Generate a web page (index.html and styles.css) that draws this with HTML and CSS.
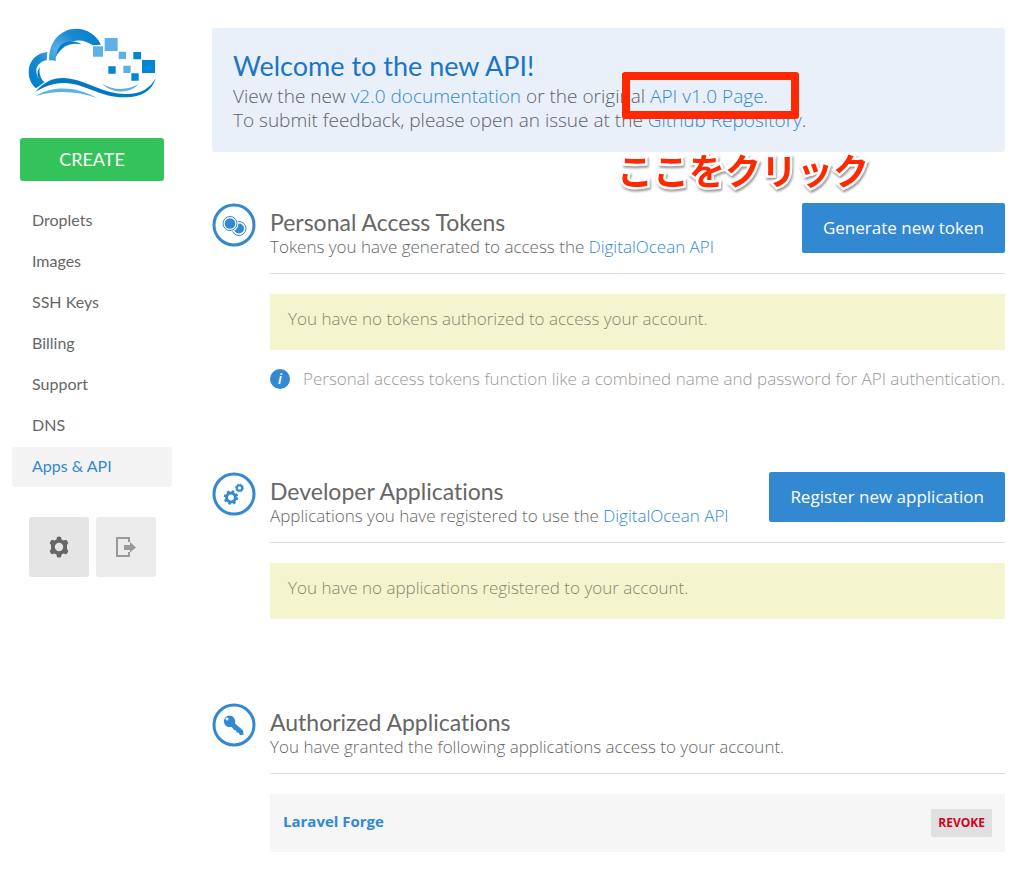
FILE: index.html
```html
<!DOCTYPE html>
<html lang="en">
<head>
<meta charset="utf-8">
<meta name="viewport" content="width=device-width, initial-scale=1">
<title>Apps &amp; API</title>
<link rel="stylesheet" href="styles.css">
</head>
<body>
<div class="page">
  <aside class="sidebar">
    <a class="logo" href="#" aria-label="Home">
      <svg viewBox="54 36 390 216" width="130" height="72" aria-hidden="true">
        <defs>
          <radialGradient id="sky" gradientUnits="userSpaceOnUse" cx="140" cy="100" r="130">
            <stop offset="0" stop-color="#5fb0e6"/><stop offset=".45" stop-color="#1b8ad0"/><stop offset="1" stop-color="#0080cc"/>
          </radialGradient>
        </defs>
        <path fill="url(#sky)" d="M118 134C114 78 152 38 199 38c33 0 60 19 74 48l-25 2c-12-9-30-16-50-14-36 3-62 26-61 62-5-3-12-4-19-2z"/>
        <path fill="url(#sky)" d="M112 108c-34 3-56 28-56 60 0 20 8 37 22 49l26-19c-16-6-25-18-25-34 0-15 12-28 31-31z"/>
        <path fill="#0580c8" d="M138 122c4-42 40-58 77-37-32-7-59 3-77 37zM90 153c-4 18 0 33 14 47-22-8-28-29-14-47z"/>
        <path fill="#007ac2" d="M77 227c30-35 62-46 104-39 56 10 101 45 165 46 45 1 74-16 91-48-10 38-42 59-95 58-70-2-106-33-158-41-40-6-72 5-107 24z"/>
        <path fill="#5eb0e8" d="M77 240c50-31 119-31 186 7-63-22-123-25-186-7zM276 203c37 21 73 21 109 2-27 30-78 28-109-2z"/>
        <path fill="#5eb0e8" d="M249 91h30v31h-30zM284 66h39v39h-39zM326 107h22v22h-22zM340 149h22v22h-22z"/>
        <path fill="#0086d6" d="M370 108h23v22h-23zM396 132h39v39h-39zM295 151h22v22h-22zM364 172h22v22h-22z"/>
      </svg>
    </a>
    <button class="create" type="button">CREATE</button>
    <nav class="nav">
      <a href="#">Droplets</a>
      <a href="#">Images</a>
      <a href="#">SSH Keys</a>
      <a href="#">Billing</a>
      <a href="#">Support</a>
      <a href="#">DNS</a>
      <a class="active" href="#" aria-current="page">Apps &amp; API</a>
    </nav>
    <div class="tools">
      <button class="tool" type="button" aria-label="Settings">
        <svg viewBox="0 0 20 22" width="20" height="22" aria-hidden="true">
          <path fill="#666" fill-rule="evenodd" d="M8 1q2-1 4 0l.6 2.500 1.800 1L17 3.800q1.800 1.200 2.300 3.300L18 9v4l1.300 1.900q-.5 2.100-2.300 3.300l-2.600-.7-1.800 1L12 21q-2 1-4 0l-.6-2.500-1.800-1-2.600.7q-1.800-1.200-2.300-3.300L2 13V9L.7 7.100Q1.200 5 3 3.800l2.600.7 1.800-1zM10 6.800a4.200 4.200 0 1 0 0 8.400 4.200 4.200 0 0 0 0-8.400z"/>
        </svg>
      </button>
      <button class="tool tool-light" type="button" aria-label="Log out">
        <svg viewBox="0 0 20 22" width="20" height="22" aria-hidden="true">
          <path fill="none" stroke="#999" stroke-width="2" d="M13 6V2H1v18h12v-4"/>
          <path fill="#999" d="M8 9h6V6l6 5.500-6 5V14H8z"/>
        </svg>
      </button>
    </div>
  </aside>

  <main class="main">
    <section class="banner">
      <h1>Welcome to the new API!</h1>
      <p>View the new <a href="#">v2.0 documentation</a> or the original <a href="#">API v1.0 Page</a>.</p>
      <p>To submit feedback, please open an issue at the <a href="#">Github Repository</a>.</p>
      <div class="highlight"></div>
      <div class="callout" lang="ja">ここをクリック</div>
    </section>

    <section class="block block-tokens">
      <svg class="badge" viewBox="0 0 44 44" width="44" height="44" aria-hidden="true">
        <circle class="ring" cx="22" cy="22" r="20"/>
        <circle class="line" cx="27" cy="25.500" r="7"/>
        <circle class="solid" cx="27" cy="25.500" r="5"/>
        <circle class="gap" cx="18" cy="20.500" r="8.500"/>
        <circle class="line" cx="18" cy="20.500" r="7"/>
        <circle class="solid" cx="18" cy="20.500" r="5.300"/>
      </svg>
      <div class="content">
        <header class="head">
          <div>
            <h2>Personal Access Tokens</h2>
            <p>Tokens you have generated to access the <a href="#">DigitalOcean API</a></p>
          </div>
          <button class="primary" type="button">Generate new token</button>
        </header>
        <p class="notice">You have no tokens authorized to access your account.</p>
        <p class="hint"><span class="info" aria-hidden="true">i</span>Personal access tokens function like a combined name and password for API authentication.</p>
      </div>
    </section>

    <section class="block block-apps">
      <svg class="badge" viewBox="0 0 44 44" width="44" height="44" aria-hidden="true">
        <circle class="ring" cx="22" cy="22" r="20"/>
        <circle class="gear" cx="19" cy="25.500" r="4.400"/>
        <circle class="teeth" cx="19" cy="25.500" r="6.300"/>
        <circle class="gear gear-small" cx="27.500" cy="16" r="2.700"/>
        <circle class="teeth teeth-small" cx="27.500" cy="16" r="3.900"/>
      </svg>
      <div class="content">
        <header class="head">
          <div>
            <h2>Developer Applications</h2>
            <p>Applications you have registered to use the <a href="#">DigitalOcean API</a></p>
          </div>
          <button class="primary" type="button">Register new application</button>
        </header>
        <p class="notice">You have no applications registered to your account.</p>
      </div>
    </section>

    <section class="block">
      <svg class="badge" viewBox="0 0 44 44" width="44" height="44" aria-hidden="true">
        <circle class="ring" cx="22" cy="22" r="20"/>
        <path class="solid" fill-rule="evenodd" d="M17.500 12.500a5.700 5.700 0 0 1 5.300 7.700l8.300 7.300.5 4.200-3.700.3-1.200-2.200-2-.4-.5-2-2-.4-2.700-3.200A5.800 5.800 0 1 1 17.500 12.500zM15 14.500a1.500 1.500 0 1 0 .1 0z"/>
      </svg>
      <div class="content">
        <header class="head">
          <div>
            <h2>Authorized Applications</h2>
            <p>You have granted the following applications access to your account.</p>
          </div>
        </header>
        <div class="row">
          <a href="#">Laravel Forge</a>
          <button class="revoke" type="button">REVOKE</button>
        </div>
      </div>
    </section>
  </main>
</div>
</body>
</html>
```
FILE: styles.css
```css
* { box-sizing: border-box; }
body {
  margin: 0;
  background: #fff;
  color: #666;
  font: 300 17px/24px "Open Sans", "Noto Sans", sans-serif;
  font-variant-ligatures: none;
}
h1, h2, p { margin: 0; }
a { color: #3289d2; text-decoration: none; }
button { border: 0; font: inherit; cursor: pointer; }
svg { display: block; }

.page { display: flex; gap: 40px; padding: 28px 19px 16px 12px; }
.sidebar { flex: 0 0 160px; }
.logo { display: block; width: 130px; margin-left: 16px; }
.create {
  display: block;
  width: 144px;
  height: 43px;
  margin: 38px 0 20px 8px;
  padding: 0 0 2px;
  border-radius: 3px;
  background: #34c25a;
  color: #fff;
  font: 400 18px/24px Lato, sans-serif;
}
.nav { display: flex; flex-direction: column; gap: 1px; }
.nav a {
  padding: 7px 20px 9px;
  border-radius: 3px;
  color: #666;
  font: 400 16px/24px Lato, sans-serif;
  font-variant-ligatures: none;
}
.nav a.active { background: #f3f3f3; color: #3289d2; }
.tools { display: flex; gap: 7px; margin: 30px 0 0 17px; }
.tool {
  display: grid;
  place-items: center;
  width: 60px;
  height: 60px;
  padding: 0;
  border-radius: 3px;
  background: #e5e5e5;
}
.tool-light { background: #ececec; }

.main { flex: 1; min-width: 0; }
.banner {
  position: relative;
  margin-bottom: 51px;
  padding: 20px 21px;
  border-radius: 3px;
  background: #e9f0fa;
  color: #5c6268;
  font-size: 19px;
}
.banner h1 {
  color: #1c75c4;
  font: 400 27px/36px Lato, sans-serif;
  font-variant-ligatures: none;
}
.highlight {
  position: absolute;
  left: 410px;
  top: 44px;
  width: 177px;
  height: 47px;
  border: 8px solid #ff2800;
  border-radius: 3px;
}
.callout {
  position: absolute;
  left: 405px;
  top: 121px;
  color: #ff2800;
  font: 700 36px/40px "Noto Sans CJK JP", sans-serif;
  white-space: nowrap;
  -webkit-text-stroke: 5px #fff;
  paint-order: stroke fill;
  filter: drop-shadow(1px 2px 1px rgba(0, 0, 0, .4));
}

.block { display: grid; grid-template-columns: 44px 1fr; gap: 14px; }
.block-tokens { margin-bottom: 81px; }
.block-apps { margin-bottom: 84px; }
.ring { fill: none; stroke: #3289d2; stroke-width: 3; }
.solid { fill: #3289d2; }
.line { fill: #fff; stroke: #3289d2; stroke-width: 1; }
.gap { fill: #fff; }
.gear { fill: none; stroke: #3289d2; stroke-width: 3; }
.gear-small { stroke-width: 2; }
.teeth { fill: none; stroke: #3289d2; stroke-width: 2; stroke-dasharray: 2.5 2.448; }
.teeth-small { stroke-width: 1; stroke-dasharray: 1.6 1.463; }

.head {
  display: flex;
  justify-content: space-between;
  gap: 20px;
  min-height: 71px;
  border-bottom: 1px solid #ddd;
}
.head h2 {
  padding-top: 6px;
  font: 400 23px/26px Lato, sans-serif;
  font-variant-ligatures: none;
}
.primary {
  align-self: flex-start;
  height: 50px;
  padding: 0 21px;
  border-radius: 2px;
  background: #3289d2;
  color: #fff;
  font-weight: 400;
}
.notice {
  margin-top: 20px;
  padding: 13px 18px 19px;
  background: #f4f5cf;
  color: #85866c;
}
.hint {
  display: flex;
  align-items: center;
  gap: 13px;
  margin-top: 17px;
  color: #999;
}
.info {
  flex: none;
  width: 20px;
  height: 20px;
  border-radius: 50%;
  background: #3289d2;
  color: #fff;
  font: italic 600 14px/20px "Open Sans", sans-serif;
  text-align: center;
}
.row {
  display: flex;
  align-items: center;
  justify-content: space-between;
  margin-top: 20px;
  padding: 15px 13px;
  background: #f6f6f6;
}
.row a { padding-bottom: 4px; font-size: 15px; font-weight: 700; }
.revoke {
  height: 28px;
  padding: 0 7px;
  border-radius: 1px;
  background: #e0e0e0;
  color: #d0021b;
  font-size: 12px;
  font-weight: 700;
}
```
